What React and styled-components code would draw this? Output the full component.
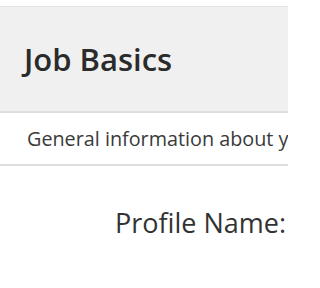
import React from 'react';
import styled, { createGlobalStyle } from 'styled-components';

const GlobalStyle = createGlobalStyle`
  html, body {
    margin: 0;
    padding: 0;
    background: #fff;
    overflow: hidden;
  }
  body {
    font-family: "Open Sans", "Noto Sans", sans-serif;
    color: #333;
  }
`;

// Viewport clip so the wide form doesn't widen the page
const Viewport = styled.div`
  width: 288px;
  height: 288px;
  overflow: hidden;
`;

const Panel = styled.section`
  margin-top: 6px;
  border-top: 1px solid #e2e2e2;
  width: 900px;
`;

const PanelHeading = styled.header`
  background-color: #f0f0f0;
  border-bottom: 2px solid #dedede;
  height: 104px;
  display: flex;
  align-items: center;
  padding-left: 24px;
`;

const PanelTitle = styled.h2`
  margin: 0;
  font-size: 31px;
  font-weight: 600;
  color: #2b2b2b;
`;

const Description = styled.p`
  margin: 0;
  height: 51px;
  display: flex;
  align-items: center;
  padding-left: 27px;
  font-size: 19.8px;
  color: #3a3a3a;
  border-bottom: 2px solid #dedede;
  white-space: nowrap;
`;

const FormRow = styled.div`
  display: flex;
  align-items: center;
  gap: 16px;
  padding-top: 34px;
`;

const Label = styled.label`
  flex: 0 0 ${({ width }) => width}px;
  text-align: right;
  font-size: 27px;
  color: #333;
  white-space: nowrap;
`;

const Input = styled.input`
  width: 400px;
  height: 40px;
  border: 1px solid #ccc;
`;

export default function App() {
  return (
    <>
      <GlobalStyle />
      <Viewport>
        <Panel>
          <PanelHeading>
            <PanelTitle>Job Basics</PanelTitle>
          </PanelHeading>
          <Description>General information about your job</Description>
          <FormRow>
            <Label width={286}>Profile Name:</Label>
            <Input type="text" />
          </FormRow>
        </Panel>
      </Viewport>
    </>
  );
}
